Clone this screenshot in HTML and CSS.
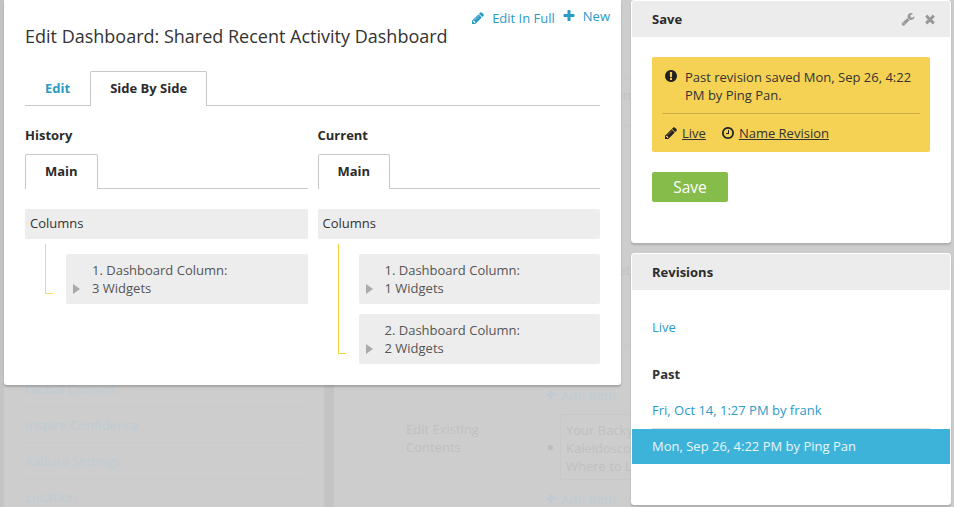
FILE: index.html
```html
<!DOCTYPE html>
<html lang="en">
<head>
    <meta charset="UTF-8">
    <title>Edit Dashboard</title>
    <link rel="stylesheet" href="styles.css">
</head>
<body>

    <svg class="sprite" xmlns="http://www.w3.org/2000/svg">
        <symbol id="i-pencil" viewBox="0 0 1792 1792"><path d="M491 1536l91-91-235-235-91 91v107h128v128h107zm523-928q0-22-22-22-10 0-17 7l-542 542q-7 7-7 17 0 22 22 22 10 0 17-7l542-542q7-7 7-17zm-54-192l416 416-832 832h-416v-416zm683 96q0 53-37 90l-166 166-416-416 166-165q36-38 90-38 53 0 91 38l235 234q37 39 37 91z"/></symbol>
        <symbol id="i-plus" viewBox="0 0 1792 1792"><path d="M1600 736v192q0 40-28 68t-68 28h-416v416q0 40-28 68t-68 28h-192q-40 0-68-28t-28-68v-416h-416q-40 0-68-28t-28-68v-192q0-40 28-68t68-28h416v-416q0-40 28-68t68-28h192q40 0 68 28t28 68v416h416q40 0 68 28t28 68z"/></symbol>
        <symbol id="i-times" viewBox="0 0 1792 1792"><path d="M1490 1322q0 40-28 68l-136 136q-28 28-68 28t-68-28l-294-294-294 294q-28 28-68 28t-68-28l-136-136q-28-28-28-68t28-68l294-294-294-294q-28-28-28-68t28-68l136-136q28-28 68-28t68 28l294 294 294-294q28-28 68-28t68 28l136 136q28 28 28 68t-28 68l-294 294 294 294q28 28 28 68z"/></symbol>
        <symbol id="i-wrench" viewBox="0 0 1792 1792"><path d="M448 1472q0-26-19-45t-45-19-45 19-19 45 19 45 45 19 45-19 19-45zm644-420l-682 682q-37 37-90 37-52 0-91-37l-106-108q-38-36-38-90 0-53 38-91l681-681q39 98 114.5 173.5t173.5 114.5zm634-435q0 39-23 106-47 134-164.5 217.5t-258.5 83.5q-185 0-316.5-131.5t-131.5-316.5 131.5-316.5 316.5-131.5q58 0 121.5 16.5t107.5 46.5q16 11 16 28t-16 28l-293 169v224l193 107q5-3 79-48.5t135.5-81 70.5-35.5q15 0 23.5 10t8.5 25z"/></symbol>
        <symbol id="i-alert" viewBox="0 0 1792 1792"><path d="M896 128q209 0 385.5 103t279.5 279.5 103 385.5-103 385.5-279.5 279.5-385.5 103-385.5-103-279.5-279.5-103-385.5 103-385.5 279.5-279.5 385.5-103zm128 1247v-190q0-14-9-23.5t-22-9.5h-192q-13 0-23 10t-10 23v190q0 13 10 23t23 10h192q13 0 22-9.5t9-23.5zm-2-344l18-621q0-12-10-18-10-8-24-8h-220q-14 0-24 8-10 6-10 18l17 621q0 10 10 17.5t24 7.5h185q14 0 23.5-7.5t10.5-17.5z"/></symbol>
        <symbol id="i-clock" viewBox="0 0 1792 1792"><path d="M1024 544v448q0 14-9 23t-23 9h-320q-14 0-23-9t-9-23v-64q0-14 9-23t23-9h224v-352q0-14 9-23t23-9h64q14 0 23 9t9 23zm416 352q0-148-73-273t-198-198-273-73-273 73-198 198-73 273 73 273 198 198 273 73 273-73 198-198 73-273zm224 0q0 209-103 385.5t-279.5 279.5-385.5 103-385.5-103-279.5-279.5-103-385.5 103-385.5 279.5-279.5 385.5-103 385.5 103 279.5 279.5 103 385.5z"/></symbol>
    </svg>

    <div class="page">
        <div class="backdrop">
            <div class="ghost-nav">
                <div class="ghost-nav-row">Global Content</div>
                <div class="ghost-nav-row">Inspire Confidence</div>
                <div class="ghost-nav-row">Kaltura Settings</div>
                <div class="ghost-nav-row">Location</div>
            </div>
            <div class="ghost-content">
                <div class="ghost-row ghost-row-first"><span>Open</span></div>
                <div class="ghost-row ghost-row-second"><span>Feature</span></div>
                <div class="ghost-add ghost-add-first"><svg class="icon"><use href="#i-plus"/></svg>Add Item</div>
                <div class="ghost-entry">
                    <div class="ghost-label">Edit Existing<br>Contents</div>
                    <div class="ghost-bullet"></div>
                    <div class="ghost-box">Your Backyard<br>Kaleidoscope<br>Where to Look</div>
                </div>
                <div class="ghost-add"><svg class="icon"><use href="#i-plus"/></svg>Add Item</div>
            </div>
        </div>

        <div class="sidebar">
            <div class="panel panel-save">
                <div class="panel-header">
                    <span>Save</span>
                    <div class="panel-tools">
                        <svg class="icon tool-wrench"><use href="#i-wrench"/></svg>
                        <svg class="icon tool-times"><use href="#i-times"/></svg>
                    </div>
                </div>
                <div class="panel-body">
                    <div class="alert">
                        <div class="alert-message">
                            <svg class="icon alert-icon"><use href="#i-alert"/></svg>
                            <p>Past revision saved Mon, Sep 26, 4:22 PM by Ping Pan.</p>
                        </div>
                        <div class="alert-links">
                            <svg class="icon"><use href="#i-pencil"/></svg>
                            <a href="#" class="alert-live">Live</a>
                            <svg class="icon"><use href="#i-clock"/></svg>
                            <a href="#">Name Revision</a>
                        </div>
                    </div>
                    <button class="save-button">Save</button>
                </div>
            </div>

            <div class="panel panel-revisions">
                <div class="panel-header"><span>Revisions</span></div>
                <a href="#" class="rev-live">Live</a>
                <div class="rev-title">Past</div>
                <a href="#" class="rev-item">Fri, Oct 14, 1:27 PM by frank</a>
                <a href="#" class="rev-item rev-selected">Mon, Sep 26, 4:22 PM by Ping Pan</a>
            </div>
        </div>
    </div>

    <div class="modal">
        <div class="modal-actions">
            <a href="#" class="action-edit"><svg class="icon"><use href="#i-pencil"/></svg>Edit In Full</a>
            <a href="#" class="action-new"><svg class="icon"><use href="#i-plus"/></svg>New</a>
        </div>
        <h1>Edit Dashboard: Shared Recent Activity Dashboard</h1>

        <div class="tabs">
            <a href="#" class="tab">Edit</a>
            <a href="#" class="tab tab-active">Side By Side</a>
        </div>

        <div class="compare">
            <div class="compare-col">
                <h2>History</h2>
                <div class="tabs">
                    <a href="#" class="tab tab-active">Main</a>
                </div>
                <div class="columns-bar">Columns</div>
                <div class="tree">
                    <div class="tree-line tree-line-history"></div>
                    <div class="tree-items">
                        <div class="tree-item">
                            <span class="arrow"></span>
                            <span>1. Dashboard Column:<br>3 Widgets</span>
                        </div>
                    </div>
                </div>
            </div>
            <div class="compare-col">
                <h2>Current</h2>
                <div class="tabs">
                    <a href="#" class="tab tab-active">Main</a>
                </div>
                <div class="columns-bar">Columns</div>
                <div class="tree">
                    <div class="tree-line"></div>
                    <div class="tree-items">
                        <div class="tree-item">
                            <span class="arrow"></span>
                            <span>1. Dashboard Column:<br>1 Widgets</span>
                        </div>
                        <div class="tree-item">
                            <span class="arrow"></span>
                            <span>2. Dashboard Column:<br>2 Widgets</span>
                        </div>
                    </div>
                </div>
            </div>
        </div>
    </div>

</body>
</html>
```

FILE: styles.css
```css
* {
    box-sizing: border-box;
}
body {
    margin: 0;
    width: 954px;
    height: 507px;
    overflow: hidden;
    position: relative;
    font-family: "Open Sans", sans-serif;
    font-size: 13px;
    line-height: 18px;
    color: #333;
    background-color: #cdcdcd;
}
a {
    color: #2b9bc7;
    text-decoration: none;
}
.sprite {
    display: none;
}
.icon {
    width: 14px;
    height: 14px;
    fill: currentColor;
    flex: none;
}
.page {
    display: flex;
    height: 507px;
}

/* dimmed page behind the modal */
.backdrop {
    width: 631px;
    flex: none;
    display: flex;
    overflow: hidden;
    padding-left: 4px;
    background-color: #c4c4c4;
}
.ghost-nav {
    width: 320px;
    flex: none;
    padding: 371px 21px 0;
    background-color: #cdcdcd;
    color: #bdccd4;
}
.ghost-nav-row {
    height: 36px;
    padding-top: 9px;
    border-bottom: 1px solid #cacaca;
}
.ghost-content {
    margin-left: 10px;
    flex: 1;
    min-width: 0;
    overflow: hidden;
    background-color: #cdcdcd;
    padding-top: 78px;
    color: #c0c0c0;
    white-space: nowrap;
}
.ghost-row {
    border-top: 1px solid #c8c8c8;
    text-align: right;
    overflow: hidden;
}
.ghost-row span {
    color: #c3c3c3;
}
.ghost-row-first {
    height: 47px;
    padding-top: 7px;
}
.ghost-row-second {
    height: 221px;
    padding-top: 135px;
    border-bottom: 1px solid #c8c8c8;
    margin-right: -20px;
}
.ghost-add {
    display: flex;
    align-items: center;
    gap: 4px;
    height: 18px;
    margin-left: 211px;
    color: #bdccd4;
}
.ghost-add-first {
    margin-top: 40px;
}
.ghost-add .icon {
    width: 12px;
    height: 12px;
}
.ghost-entry {
    display: flex;
    margin: 10px 0 10px 72px;
}
.ghost-label {
    width: 142px;
    flex: none;
    padding-top: 6px;
}
.ghost-bullet {
    width: 5px;
    height: 5px;
    flex: none;
    margin: 31px 7px 0 0;
    border-radius: 50%;
    background-color: #bdbdbd;
}
.ghost-box {
    width: 140px;
    height: 66px;
    flex: none;
    padding: 6px 5px;
    border: 1px solid #c8c8c8;
}

/* right column */
.sidebar {
    width: 320px;
    flex: none;
}
.panel {
    border: 1px solid #fff;
    border-radius: 3px;
    background: #fff;
    box-shadow: 0 2px 2px rgba(0, 0, 0, 0.15);
    overflow: hidden;
}
.panel-save {
    height: 243px;
    margin-bottom: 10px;
}
.panel-revisions {
    height: 252px;
}
.panel-header {
    display: flex;
    justify-content: space-between;
    align-items: center;
    height: 36px;
    padding: 0 13px 0 20px;
    background-color: #ececec;
    font-weight: 700;
    color: #2b2b2b;
}
.panel-tools {
    display: flex;
    align-items: center;
    gap: 8px;
    color: #999;
}
.panel-body {
    padding: 20px;
}
.alert {
    height: 95px;
    padding: 11px 10px 0;
    border-radius: 2px;
    background-color: #f5d254;
}
.alert-message {
    display: flex;
    gap: 6px;
    height: 46px;
    padding-left: 2px;
    border-bottom: 1px solid #c9ad4a;
    margin-bottom: 10px;
}
.alert-message p {
    margin: 0;
    padding-left: 1px;
}
.alert-icon {
    margin-top: 1px;
    color: #222;
}
.alert-links {
    display: flex;
    align-items: center;
    padding-left: 2px;
    color: #222;
}
.alert-links a {
    color: #333;
    text-decoration: underline;
    margin-left: 4px;
}
.alert-links a.alert-live {
    margin-right: 15px;
}
.save-button {
    display: block;
    width: 76px;
    height: 30px;
    margin-top: 20px;
    border: none;
    border-radius: 2px;
    background-color: #86bc4a;
    color: #fff;
    font-family: inherit;
    font-size: 15.5px;
    cursor: pointer;
}
.rev-live {
    display: block;
    margin: 28px 20px 29px;
}
.rev-title {
    margin: 0 20px 9px;
    font-weight: 700;
}
.rev-item {
    display: block;
    margin: 0 20px;
    padding: 9px 0;
    border-bottom: 1px solid #ddd;
}
.rev-selected {
    margin: 0;
    padding: 8px 20px 9px;
    border-bottom: none;
    background-color: #3eb3da;
    color: #e8f6fb;
}

/* modal */
.modal {
    position: absolute;
    left: 4px;
    top: 0;
    width: 617px;
    height: 385px;
    padding: 0 21px;
    border-radius: 0 0 3px 3px;
    background: #fff;
    box-shadow: 0 2px 2px rgba(0, 0, 0, 0.2);
}
.modal-actions {
    display: flex;
    justify-content: flex-end;
    align-items: flex-start;
    gap: 7px;
    height: 23px;
    padding: 7px 0 0;
}
.modal-actions a {
    display: flex;
    align-items: center;
    gap: 7px;
}
.action-edit {
    margin-top: 2px;
}
.action-new {
    margin-right: -10px;
    gap: 8px;
}
h1 {
    margin: 0 0 22px;
    font-size: 18px;
    font-weight: 400;
    line-height: 26px;
    color: #333;
}
.tabs {
    display: flex;
    height: 35px;
    border-bottom: 1px solid #c8c8c8;
}
.tab {
    height: 35px;
    padding: 7px 19px 0;
    font-weight: 700;
    border: 1px solid transparent;
    border-bottom: none;
}
.tab-active {
    border-color: #c8c8c8;
    border-radius: 2px 2px 0 0;
    background: #fff;
    color: #2b2b2b;
}
.compare {
    display: flex;
    gap: 10px;
    margin-top: 20px;
}
.compare-col {
    flex: 1;
    min-width: 0;
}
h2 {
    margin: 0 0 10px;
    font-size: 13px;
    line-height: 18px;
    font-weight: 700;
    color: #2b2b2b;
}
.columns-bar {
    height: 30px;
    margin-top: 20px;
    padding: 5px;
    border-radius: 2px;
    background-color: #ededed;
    color: #333;
}
.tree {
    display: flex;
    margin-left: 20px;
}
.tree-line {
    width: 8px;
    margin: 5px 13px 20px 0;
    border-left: 1px solid #f3d23c;
    border-bottom: 1px solid #f3d23c;
}
.tree-line-history {
    border-color: #f5d774;
}
.tree-items {
    flex: 1;
    min-width: 0;
    padding-top: 15px;
}
.tree-item {
    display: flex;
    height: 50px;
    margin-bottom: 10px;
    padding: 7px 0 0 7px;
    border-radius: 2px;
    background-color: #ededed;
    color: #555;
}
.arrow {
    width: 0;
    height: 0;
    margin: 23px 12px 0 0;
    border-left: 7px solid #aaa;
    border-top: 5px solid transparent;
    border-bottom: 5px solid transparent;
}
```
